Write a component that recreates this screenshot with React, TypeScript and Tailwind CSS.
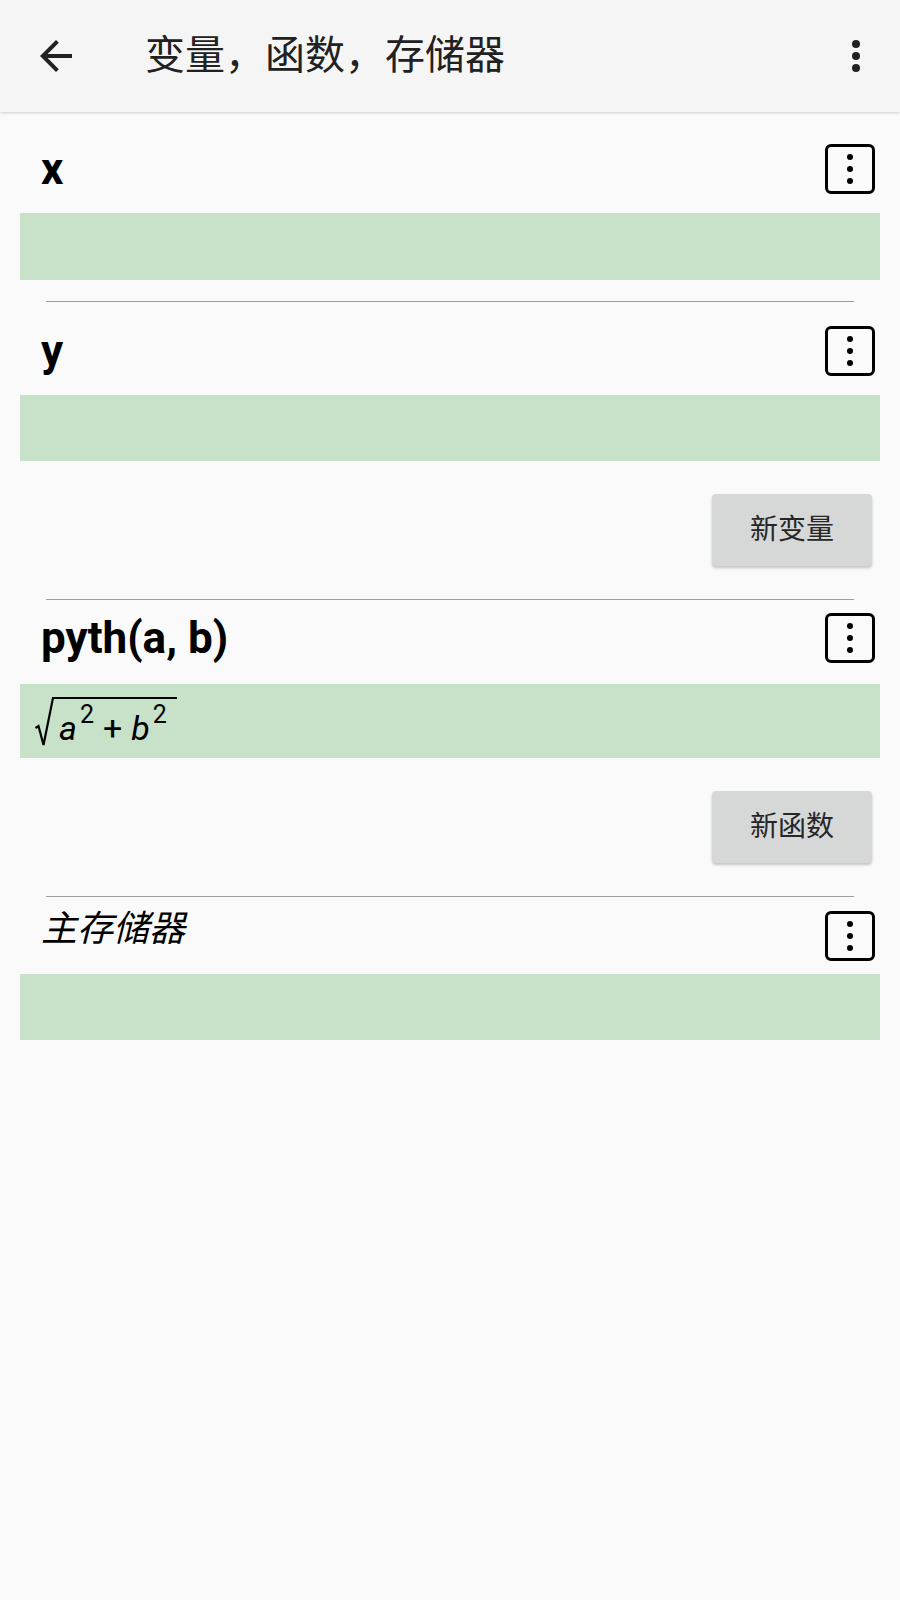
import React from "react";

const font = { fontFamily: 'Roboto, "Noto Sans CJK SC", sans-serif' };

function Dots() {
  return (
    <div className="w-[50px] h-[50px] mr-[5px] border-[3px] border-black rounded-[6px] flex flex-col items-center justify-center gap-[6px] shrink-0">
      <div className="w-[6px] h-[6px] rounded-full bg-black" />
      <div className="w-[6px] h-[6px] rounded-full bg-black" />
      <div className="w-[6px] h-[6px] rounded-full bg-black" />
    </div>
  );
}

function Divider({ className }: { className: string }) {
  return <div className={"mx-[26px] h-px bg-[#9e9e9e] " + className} />;
}

function Btn({ label }: { label: string }) {
  return (
    <div className="flex justify-end pr-[8px] mt-[33px]">
      <div className="w-[160px] h-[72px] rounded-[4px] bg-[#d6d7d7] shadow-[0_2px_3px_rgba(0,0,0,0.22)] flex items-center justify-center text-[28px] text-[#262626]">
        {label}
      </div>
    </div>
  );
}

export default function App() {
  return (
    <div className="w-[900px] min-h-[1600px] bg-[#fafafa]" style={font}>
      <div className="relative z-10 h-[112px] bg-[#f5f5f5] flex items-center shadow-[0_1px_3px_rgba(0,0,0,0.18)]">
        <svg className="ml-[32px] w-12 h-12" viewBox="0 0 24 24" fill="#212121">
          <path d="M20 11H7.83l5.59-5.59L12 4l-8 8 8 8 1.41-1.41L7.83 13H20v-2z" />
        </svg>
        <div className="ml-[65px] text-[40px] leading-none text-[#212121]">变量，函数，存储器</div>
        <svg className="ml-auto mr-[20px] w-12 h-12" viewBox="0 0 24 24" fill="#212121">
          <circle cx="12" cy="6" r="2" />
          <circle cx="12" cy="12" r="2" />
          <circle cx="12" cy="18" r="2" />
        </svg>
      </div>

      <div className="px-5">
        {/* x */}
        <div className="pt-[32px] h-[82px] flex items-center justify-between">
          <div className="pl-[21px] text-[44px] font-bold leading-none text-black">x</div>
          <Dots />
        </div>
        <div className="mt-[19px] h-[67px] bg-[#c8e2c9]" />
        <Divider className="mt-[21px]" />

        {/* y */}
        <div className="mt-[24px] h-[50px] flex items-center justify-between">
          <div className="pl-[21px] text-[44px] font-bold leading-none text-black">y</div>
          <Dots />
        </div>
        <div className="mt-[19px] h-[66px] bg-[#c8e2c9]" />

        <Btn label="新变量" />
        <Divider className="mt-[33px]" />

        {/* pyth */}
        <div className="mt-[13px] h-[50px] flex items-center justify-between">
          <div className="pl-[21px] text-[44px] font-bold leading-none text-black">pyth(a, b)</div>
          <Dots />
        </div>
        <div className="mt-[21px] h-[74px] bg-[#c8e2c9] flex items-start pl-[15px]">
          <svg className="mt-[13px] shrink-0" width="19" height="50" viewBox="0 0 19 50" fill="none" stroke="#000">
            <path d="M0.5 31 L3.5 29 L8.5 48 L18 1 L19 1" strokeWidth="2.2" strokeLinejoin="miter" />
          </svg>
          <div className="mt-[13px] border-t-2 border-black pt-[14px] pl-[5px] pr-[10px] h-[50px] text-[34px] leading-[30px] italic text-black whitespace-nowrap">
            <span>a</span>
            <span className="not-italic text-[25px] leading-[0] align-[17px] ml-[3px]">2</span>
            <span className="not-italic mx-[9px]">+</span>
            <span>b</span>
            <span className="not-italic text-[25px] leading-[0] align-[17px] ml-[3px]">2</span>
          </div>
        </div>

        <Btn label="新函数" />
        <Divider className="mt-[33px]" />

        {/* memory */}
        <div className="mt-[14px] h-[50px] flex items-start justify-between">
          <div className="pl-[21px] text-[36px] italic leading-[36px] text-black">主存储器</div>
          <Dots />
        </div>
        <div className="mt-[13px] h-[66px] bg-[#c8e2c9]" />
      </div>
    </div>
  );
}
